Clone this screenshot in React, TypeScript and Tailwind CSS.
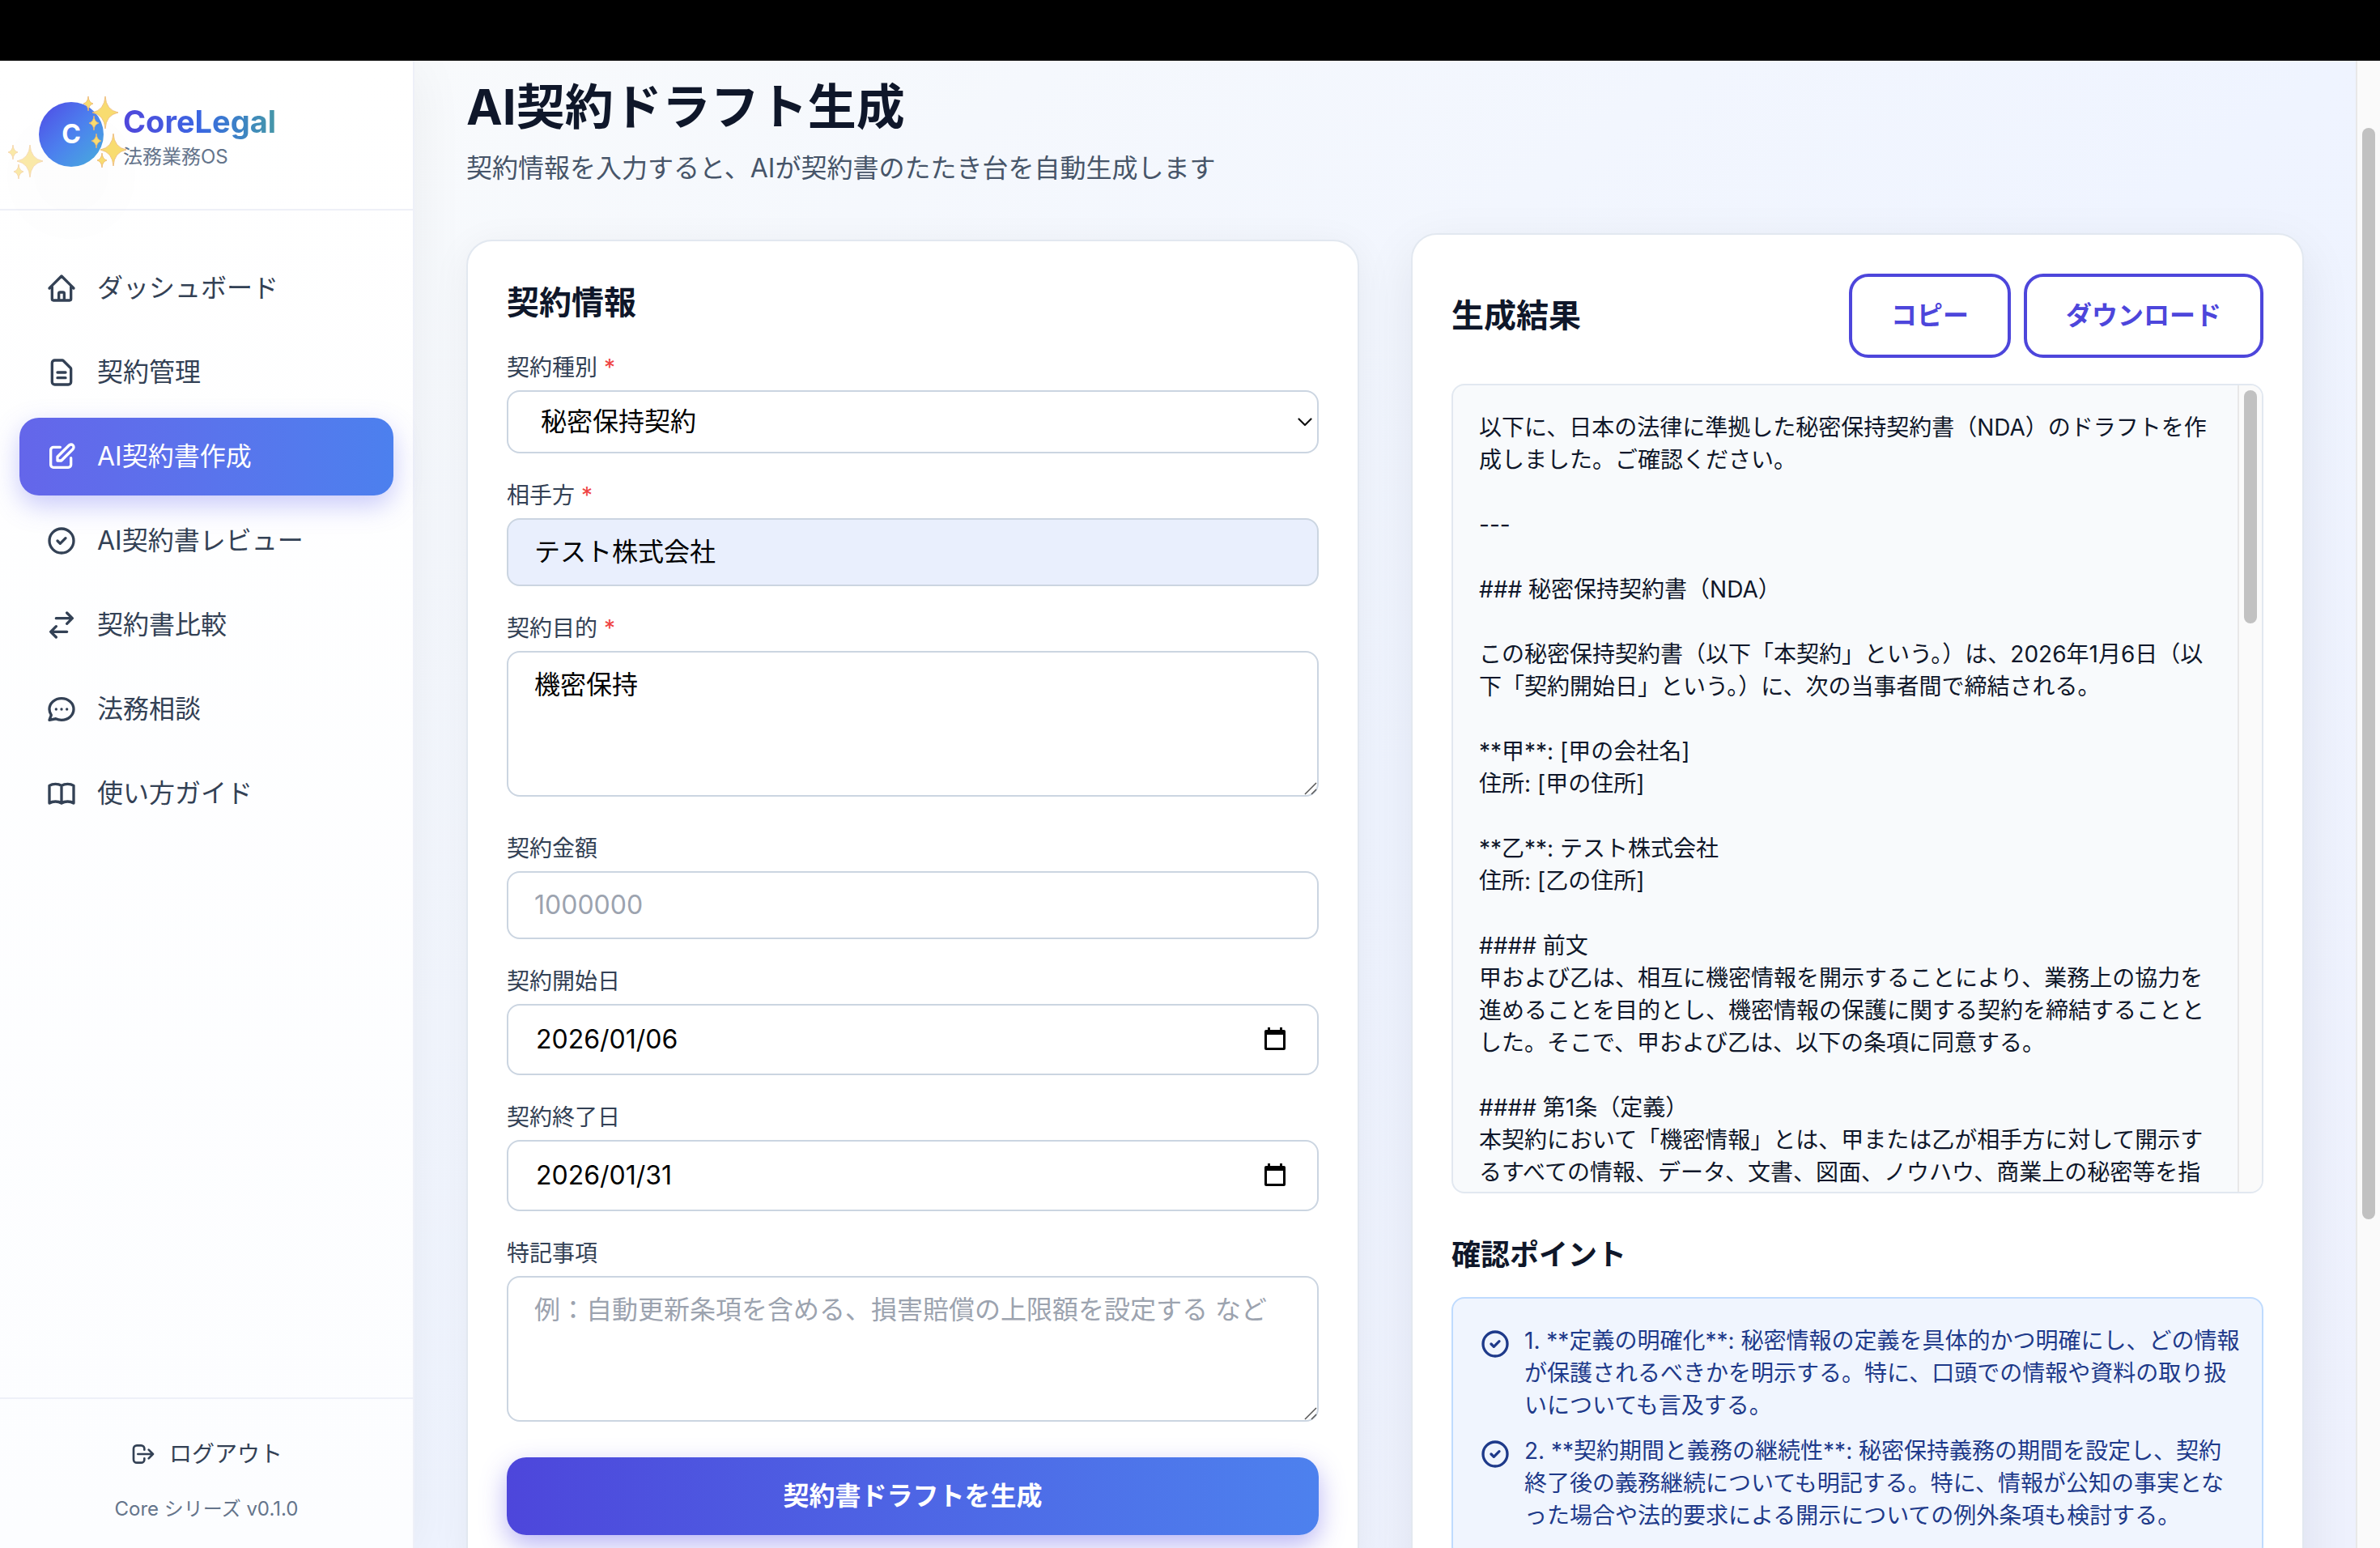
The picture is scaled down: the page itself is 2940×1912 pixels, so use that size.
import type { ReactNode } from 'react'
import clsx from 'clsx'

interface IconProps {
  path: string
  className?: string
}

interface FieldProps {
  id: string
  label: string
  required?: boolean
  children: ReactNode
}

const ICONS = {
  home: 'M3 12l2-2m0 0l7-7 7 7M5 10v10a1 1 0 001 1h3m10-11l2 2m-2-2v10a1 1 0 01-1 1h-3m-6 0a1 1 0 001-1v-4a1 1 0 011-1h2a1 1 0 011 1v4a1 1 0 001 1m-6 0h6',
  document:
    'M9 12h6m-6 4h6m2 5H7a2 2 0 01-2-2V5a2 2 0 012-2h5.586a1 1 0 01.707.293l5.414 5.414a1 1 0 01.293.707V19a2 2 0 01-2 2z',
  edit: 'M11 5H6a2 2 0 00-2 2v11a2 2 0 002 2h11a2 2 0 002-2v-5m-1.414-9.414a2 2 0 112.828 2.828L11.828 15H9v-2.828l8.586-8.586z',
  check: 'M9 12l2 2 4-4m6 2a9 9 0 11-18 0 9 9 0 0118 0z',
  compare: 'M8 7h12m0 0l-4-4m4 4l-4 4m0 6H4m0 0l4 4m-4-4l4-4',
  chat: 'M8 12h.01M12 12h.01M16 12h.01M21 12c0 4.418-4.03 8-9 8a9.863 9.863 0 01-4.255-.949L3 20l1.395-3.72C3.512 15.042 3 13.574 3 12c0-4.418 4.03-8 9-8s9 3.582 9 8z',
  book: 'M12 6.253v13m0-13C10.832 5.477 9.246 5 7.5 5S4.168 5.477 3 6.253v13C4.168 18.477 5.754 18 7.5 18s3.332.477 4.5 1.253m0-13C13.168 5.477 14.754 5 16.5 5c1.747 0 3.332.477 4.5 1.253v13C19.832 18.477 18.247 18 16.5 18c-1.746 0-3.332.477-4.5 1.253',
  logout:
    'M17 16l4-4m0 0l-4-4m4 4H7m6 4v1a3 3 0 01-3 3H6a3 3 0 01-3-3V7a3 3 0 013-3h4a3 3 0 013 3v1',
}

const NAV_ITEMS = [
  { label: 'ダッシュボード', icon: ICONS.home },
  { label: '契約管理', icon: ICONS.document },
  { label: 'AI契約書作成', icon: ICONS.edit, active: true },
  { label: 'AI契約書レビュー', icon: ICONS.check },
  { label: '契約書比較', icon: ICONS.compare },
  { label: '法務相談', icon: ICONS.chat },
  { label: '使い方ガイド', icon: ICONS.book },
]

const DRAFT = `以下に、日本の法律に準拠した秘密保持契約書（NDA）のドラフトを作成しました。ご確認ください。

---

### 秘密保持契約書（NDA）

この秘密保持契約書（以下「本契約」という。）は、2026年1月6日（以下「契約開始日」という。）に、次の当事者間で締結される。

**甲**: [甲の会社名]
住所: [甲の住所]

**乙**: テスト株式会社
住所: [乙の住所]

#### 前文
甲および乙は、相互に機密情報を開示することにより、業務上の協力を進めることを目的とし、機密情報の保護に関する契約を締結することとした。そこで、甲および乙は、以下の条項に同意する。

#### 第1条（定義）
本契約において「機密情報」とは、甲または乙が相手方に対して開示するすべての情報、データ、文書、図面、ノウハウ、商業上の秘密等を指`

const CHECK_POINTS = [
  '1. **定義の明確化**: 秘密情報の定義を具体的かつ明確にし、どの情報が保護されるべきかを明示する。特に、口頭での情報や資料の取り扱いについても言及する。',
  '2. **契約期間と義務の継続性**: 秘密保持義務の期間を設定し、契約終了後の義務継続についても明記する。特に、情報が公知の事実となった場合や法的要求による開示についての例外条項も検討する。',
]

const inputClass =
  'block w-full rounded-2xl border-2 border-[#cbd5e1] bg-white px-8 py-4 text-[32px] leading-[48px] text-black placeholder:text-[#9ca3af]'

function Icon({ path, className }: IconProps) {
  return (
    <svg
      className={clsx('shrink-0', className)}
      viewBox="0 0 24 24"
      fill="none"
      stroke="currentColor"
      strokeWidth={2}
      strokeLinecap="round"
      strokeLinejoin="round"
      aria-hidden="true"
    >
      <path d={path} />
    </svg>
  )
}

// Cluster of one large and two small four-pointed stars
function Sparkles({ className }: { className: string }) {
  return (
    <svg
      className={clsx('absolute h-11 w-[46px]', className)}
      viewBox="0 0 46 44"
      fill="#f8dc70"
      stroke="#ecb46c"
      strokeWidth="0.8"
      strokeLinejoin="round"
      aria-hidden="true"
    >
      <path d="M29 1Q30 18 45 21Q30 24 29 41Q28 24 13 21Q28 18 29 1Z" />
      <path d="M8 1Q8.500 8.500 14 10Q8.500 11.500 8 19Q7.500 11.500 2 10Q7.500 8.500 8 1Z" />
      <path d="M15 25Q15.500 32.500 21 34Q15.500 35.500 15 43Q14.500 35.500 9 34Q14.500 32.500 15 25Z" />
    </svg>
  )
}

function Sidebar() {
  return (
    <aside className="relative z-10 flex w-[512px] shrink-0 flex-col border-r-2 border-[#eef0f8] bg-linear-to-b from-white to-[#fcfdff] shadow-[0_8px_64px_rgba(15,23,42,0.06)]">
      <div className="flex items-center gap-6 border-b-2 border-[#eef0f8] px-12 pt-[47px] pb-12">
        <div className="relative flex size-20 items-center justify-center rounded-full bg-linear-to-br from-[#4f46e5] via-[#4c80ee] to-[#48addb] shadow-[0_50px_100px_rgba(0,0,0,0.04)]">
          <span className="text-[32px] leading-10 font-bold text-white">C</span>
          <Sparkles className="-top-2 left-[53px]" />
          <Sparkles className="top-[38px] left-[63px]" />
          <Sparkles className="top-[52px] -left-10 opacity-60" />
        </div>
        <div>
          <div className="w-fit bg-linear-to-r from-[#4f46db] via-[#3a66e2] to-[#4797a8] bg-clip-text text-[38px] leading-[56px] font-bold text-transparent">
            CoreLegal
          </div>
          <p className="text-2xl text-[#64748b]">法務業務OS</p>
        </div>
      </div>

      <nav className="flex flex-1 flex-col gap-2 px-6 py-12">
        {NAV_ITEMS.map((item) => (
          <a
            key={item.label}
            href="#"
            className={clsx(
              'flex items-center gap-6 rounded-3xl px-8 py-6 text-[32px] leading-[48px]',
              item.active
                ? 'bg-linear-to-r from-[#6466ea] to-[#4c80ee] text-white shadow-[0_12px_32px_rgba(99,102,241,0.35)]'
                : 'text-[#334155]'
            )}
          >
            <Icon path={item.icon} className="size-10" />
            {item.label}
          </a>
        ))}
      </nav>

      <div className="flex flex-col gap-4 border-t-2 border-[#eef0f8] p-8">
        <button
          type="button"
          className="flex items-center justify-center gap-4 py-4 text-[28px] leading-10 text-[#334155]"
        >
          <Icon path={ICONS.logout} className="size-8" />
          ログアウト
        </button>
        <p className="text-center text-2xl text-[#64748b]">Core シリーズ v0.1.0</p>
      </div>
    </aside>
  )
}

function Field({ id, label, required, children }: FieldProps) {
  return (
    <div className="flex flex-col gap-2">
      <label htmlFor={id} className="text-[28px] leading-10 text-[#334155]">
        {label}
        {required && <span className="text-[#ef4444]"> *</span>}
      </label>
      {children}
    </div>
  )
}

function TextArea(props: { id: string; defaultValue?: string; placeholder?: string }) {
  return (
    <div className="relative mb-3">
      <textarea {...props} rows={3} className={clsx(inputClass, 'resize-none')} />
      <svg
        className="absolute right-0.5 bottom-0.5 size-4"
        viewBox="0 0 16 16"
        stroke="#555555"
        strokeWidth="1.5"
        aria-hidden="true"
      >
        <path d="M1 15L15 1M9 15L15 9" />
      </svg>
    </div>
  )
}

function DateInput(props: { id: string; defaultValue: string }) {
  return (
    <div className="flex items-center rounded-2xl border-2 border-[#cbd5e1] bg-white py-[18px] pr-9 pl-[34px]">
      <input
        {...props}
        type="text"
        className="min-w-0 flex-1 text-[32px] leading-[48px] text-black outline-none"
      />
      <button type="button" aria-label="日付を選択">
        <svg className="size-10" viewBox="0 0 40 40" aria-hidden="true">
          <path
            fillRule="evenodd"
            d="M15 5h3v3h12V5h3v3h2a2 2 0 012 2v21a2 2 0 01-2 2H13a2 2 0 01-2-2V10a2 2 0 012-2h2zM14 14v16h20V14z"
          />
        </svg>
      </button>
    </div>
  )
}

function ContractForm() {
  return (
    <form className="flex flex-col gap-8 rounded-[32px] border-2 border-[#e2e8f0] bg-white p-12 shadow-[0_8px_48px_rgba(15,23,42,0.06)]">
      <h2 className="text-[40px] leading-[56px] font-bold text-[#0f172a]">契約情報</h2>

      <Field id="contract-type" label="契約種別" required>
        <div className="relative">
          <select
            id="contract-type"
            className="block h-[78px] w-full appearance-none rounded-2xl border-2 border-[#cbd5e1] bg-white px-10 text-[32px] text-black"
          >
            <option>秘密保持契約</option>
          </select>
          <svg
            className="pointer-events-none absolute top-[30px] right-1.5 size-5"
            viewBox="0 0 20 20"
            fill="none"
            stroke="#111111"
            strokeWidth="2.2"
            strokeLinecap="round"
            strokeLinejoin="round"
            aria-hidden="true"
          >
            <path d="M1.500 5.500l7.500 7.500 7.500-7.500" />
          </svg>
        </div>
      </Field>

      <Field id="counterparty" label="相手方" required>
        <input
          id="counterparty"
          type="text"
          defaultValue="テスト株式会社"
          className="block w-full rounded-2xl border-2 border-[#cbd5e1] bg-[#e9effd] px-8 py-4 text-[32px] leading-[48px] text-black"
        />
      </Field>

      <Field id="purpose" label="契約目的" required>
        <TextArea id="purpose" defaultValue="機密保持" />
      </Field>

      <Field id="amount" label="契約金額">
        <input id="amount" type="text" inputMode="numeric" placeholder="1000000" className={inputClass} />
      </Field>

      <Field id="start-date" label="契約開始日">
        <DateInput id="start-date" defaultValue="2026/01/06" />
      </Field>

      <Field id="end-date" label="契約終了日">
        <DateInput id="end-date" defaultValue="2026/01/31" />
      </Field>

      <Field id="notes" label="特記事項">
        <TextArea id="notes" placeholder="例：自動更新条項を含める、損害賠償の上限額を設定する など" />
      </Field>

      <button
        type="button"
        className="rounded-3xl bg-linear-to-r from-[#4d46db] to-[#4d81ee] py-6 text-[32px] leading-[48px] font-semibold text-white shadow-[0_12px_32px_rgba(79,70,229,0.4)]"
      >
        契約書ドラフトを生成
      </button>
    </form>
  )
}

function OutlineButton({ children }: { children: ReactNode }) {
  return (
    <button
      type="button"
      className="rounded-3xl border-4 border-[#4d46db] bg-white px-12 py-6 text-[32px] leading-[48px] font-semibold text-[#4d46db]"
    >
      {children}
    </button>
  )
}

function ResultPanel() {
  return (
    <section className="-mt-2 rounded-[32px] border-2 border-[#e2e8f0] bg-white p-12 shadow-[0_20px_64px_rgba(15,23,42,0.08)]">
      <div className="flex items-center justify-between">
        <h2 className="text-[40px] leading-[56px] font-bold text-[#0f172a]">生成結果</h2>
        <div className="flex gap-4">
          <OutlineButton>コピー</OutlineButton>
          <OutlineButton>ダウンロード</OutlineButton>
        </div>
      </div>

      <div className="mt-8 flex h-[1000px] overflow-hidden rounded-2xl border-2 border-[#e2e8f0] bg-[#f8fafc]">
        <div className="min-w-0 flex-1 p-8 text-[28px] leading-10 whitespace-pre-wrap text-[#0f172a]">
          {DRAFT}
        </div>
        <div className="w-[30px] shrink-0 border-l-2 border-[#e8e8e8] bg-[#fafafa] px-1.5 py-1.5">
          <div className="h-72 w-4 rounded-full bg-[#c1c1c1]" />
        </div>
      </div>

      <h3 className="mt-12 text-4xl leading-[56px] font-bold text-[#0f172a]">確認ポイント</h3>
      <ul className="mt-6 flex flex-col gap-4 rounded-2xl border-2 border-[#bfdbfe] bg-[#f0f5fe] py-8 pr-[26px] pl-8 text-[28px] leading-10 text-[#1e3a8a]">
        {CHECK_POINTS.map((point) => (
          <li key={point} className="flex items-start gap-4">
            <Icon path={ICONS.check} className="mt-1 size-10" />
            <span>{point}</span>
          </li>
        ))}
      </ul>
    </section>
  )
}

export default function App() {
  return (
    <div
      lang="ja"
      className="flex h-screen flex-col overflow-hidden font-[Inter,'Noto_Sans_CJK_JP',sans-serif]"
    >
      <div className="h-[75px] shrink-0 bg-black" />
      <div className="flex min-h-0 flex-1">
        <Sidebar />
        <main className="min-w-0 flex-1 overflow-hidden bg-linear-to-br from-[#f8fafc] via-[#eff4ff] to-[#eef1fd] px-16 pt-[21px]">
          <h1 className="text-6xl leading-[72px] font-bold text-[#0f172a]">AI契約ドラフト生成</h1>
          <p className="mt-4 text-[32px] leading-[48px] text-[#475569]">
            契約情報を入力すると、AIが契約書のたたき台を自動生成します
          </p>
          <div className="mt-16 grid grid-cols-2 items-start gap-16">
            <ContractForm />
            <ResultPanel />
          </div>
        </main>
        {/* Page scrollbar */}
        <div className="w-[30px] shrink-0 border-l-2 border-[#e8e8e8] bg-[#fafafa] px-1.5 pt-[83px]">
          <div className="h-[1348px] w-4 rounded-full bg-[#c1c1c1]" />
        </div>
      </div>
    </div>
  )
}
